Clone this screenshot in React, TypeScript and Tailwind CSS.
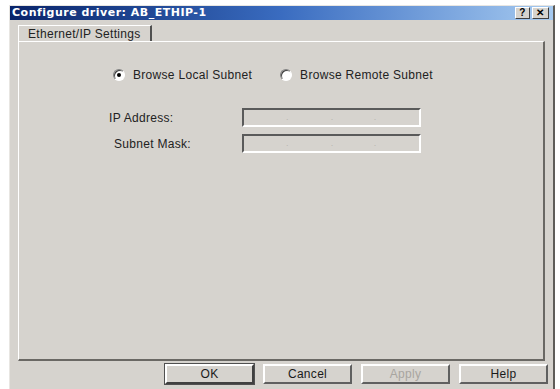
import React from "react";

function Radio({ checked, label }: { checked?: boolean; label: string }) {
  return (
    <label className="flex items-center gap-[8px]">
      <span className="relative h-[12px] w-[12px] rounded-full border border-t-[#808080] border-l-[#808080] border-r-white border-b-white bg-white shadow-[inset_1px_1px_0_#404040]">
        {checked && (
          <span className="absolute left-[3px] top-[3px] h-[4px] w-[4px] rounded-full bg-black" />
        )}
      </span>
      <span>{label}</span>
    </label>
  );
}

function IpField() {
  return (
    <div className="flex h-[19px] w-[179px] items-center border-2 border-t-[#5a5a5a] border-l-[#5a5a5a] border-r-white border-b-white bg-[#d6d3ce] text-[9px] text-[#b8b5b0]">
      <span className="ml-[42px]">.</span>
      <span className="ml-[42px]">.</span>
      <span className="ml-[40px]">.</span>
    </div>
  );
}

function Button({
  label,
  primary,
  disabled,
}: {
  label: string;
  primary?: boolean;
  disabled?: boolean;
}) {
  return (
    <button
      className={`flex h-[20px] w-[89px] items-center justify-center border-2 border-t-white border-l-white bg-[#d6d3ce] text-[12px] ${
        primary
          ? "border-r-[#404040] border-b-[#404040] outline outline-1 outline-[#505050]"
          : "border-r-[#606060] border-b-[#606060]"
      } ${disabled ? "text-[#a8a5a0]" : "text-[#1a1a1a]"}`}
    >
      {label}
    </button>
  );
}

export default function App() {
  return (
    <div
      className="h-[389px] w-[560px] overflow-hidden bg-white pl-[9px] pt-[5px] text-[12px] tracking-[0.3px] text-[#222]"
      style={{ fontFamily: '"Liberation Sans", Arial, sans-serif' }}
    >
      <div className="flex h-[384px] w-[546px] flex-col border-l border-t border-r-2 border-[#e8e6e2] border-r-[#5e5c58] bg-[#d6d3ce]">
        {/* Title bar */}
        <div className="flex h-[14px] items-center justify-between bg-gradient-to-r from-[#0a246a] via-[#3a6cc0] to-[#a6caf0] pl-[2px] pr-[4px]">
          <span
            className="text-[11px] font-bold tracking-[0.5px] text-white"
            style={{ fontFamily: '"DejaVu Sans", Verdana, sans-serif' }}
          >
            Configure driver: AB_ETHIP-1
          </span>
          <div className="flex gap-[2px]">
            <span className="flex h-[12px] w-[15px] items-center justify-center border border-t-white border-l-white border-r-[#404040] border-b-[#404040] bg-[#d6d3ce] text-[10px] font-bold leading-none text-black">
              ?
            </span>
            <span className="flex h-[12px] w-[17px] items-center justify-center border border-t-white border-l-white border-r-[#404040] border-b-[#404040] bg-[#d6d3ce] text-[10px] font-bold leading-none text-black">
              ✕
            </span>
          </div>
        </div>

        {/* Tab strip */}
        <div className="ml-[8px] mt-[5px] flex">
          <div className="flex h-[16px] w-[134px] items-center border-l border-t border-white border-r-2 border-r-[#505050] pl-[9px]">
            Ethernet/IP Settings
          </div>
        </div>

        {/* Tab panel */}
        <div className="ml-[8px] flex h-[320px] w-[527px] flex-col border-l border-t border-white border-r-2 border-b-2 border-r-[#6a6864] border-b-[#6a6864] pl-[94px] pt-[24px]">
          <div className="flex items-center">
            <Radio checked label="Browse Local Subnet" />
            <div className="ml-[28px]">
              <Radio label="Browse Remote Subnet" />
            </div>
          </div>

          <div className="mt-[24px] -ml-[4px] flex items-center">
            <span className="w-[133px]">IP Address:</span>
            <IpField />
          </div>
          <div className="mt-[7px] -ml-[4px] flex items-center">
            <span className="w-[133px] pl-[5px]">Subnet Mask:</span>
            <IpField />
          </div>
        </div>

        {/* Buttons */}
        <div className="ml-[155px] mt-[3px] flex gap-[9px]">
          <Button label="OK" primary />
          <Button label="Cancel" />
          <Button label="Apply" disabled />
          <Button label="Help" />
        </div>
      </div>
    </div>
  );
}
